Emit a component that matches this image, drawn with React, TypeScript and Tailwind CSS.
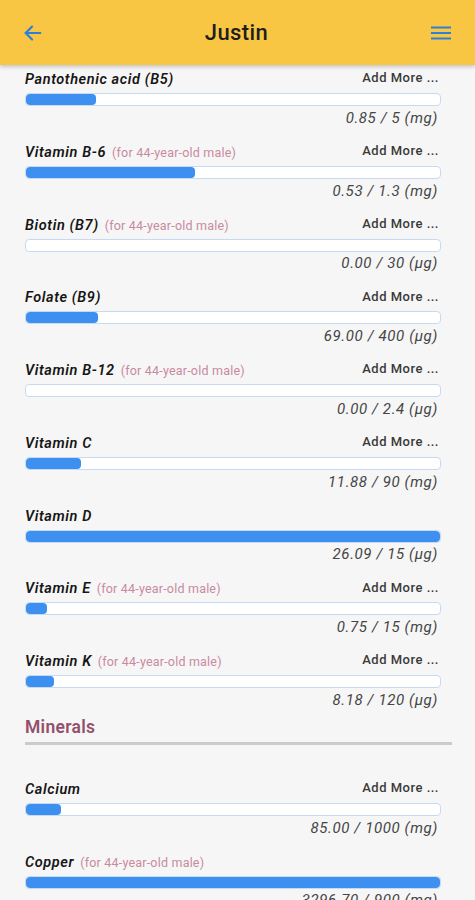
const font = { fontFamily: 'Roboto, "Noto Sans", sans-serif' };

type Item = {
  name: string;
  forMale?: boolean;
  addMore?: boolean;
  value: string;
  pct: number;
};

const vitamins: Item[] = [
  { name: 'Pantothenic acid (B5)', addMore: true, value: '0.85 / 5 (mg)', pct: 17 },
  { name: 'Vitamin B-6', forMale: true, addMore: true, value: '0.53 / 1.3 (mg)', pct: 40.8 },
  { name: 'Biotin (B7)', forMale: true, addMore: true, value: '0.00 / 30 (µg)', pct: 0 },
  { name: 'Folate (B9)', addMore: true, value: '69.00 / 400 (µg)', pct: 17.3 },
  { name: 'Vitamin B-12', forMale: true, addMore: true, value: '0.00 / 2.4 (µg)', pct: 0 },
  { name: 'Vitamin C', addMore: true, value: '11.88 / 90 (mg)', pct: 13.2 },
  { name: 'Vitamin D', value: '26.09 / 15 (µg)', pct: 100 },
  { name: 'Vitamin E', forMale: true, addMore: true, value: '0.75 / 15 (mg)', pct: 5 },
  { name: 'Vitamin K', forMale: true, addMore: true, value: '8.18 / 120 (µg)', pct: 6.8 },
];

const minerals: Item[] = [
  { name: 'Calcium', addMore: true, value: '85.00 / 1000 (mg)', pct: 8.5 },
  { name: 'Copper', forMale: true, value: '3296.70 / 900 (mg)', pct: 100 },
];

function Row({ item }: { item: Item }) {
  return (
    <div className="h-[72.75px] pl-[25px] pr-[34px]">
      <div className="flex items-center justify-between h-[18px]">
        <div className="flex items-baseline">
          <span className="text-[14.5px] font-semibold italic text-[#161616] tracking-[0.6px]">{item.name}</span>
          {item.forMale && (
            <span className="ml-[6px] text-[12.5px] text-[#c98aa0] tracking-[0.2px]">(for 44-year-old male)</span>
          )}
        </div>
        {item.addMore && (
          <span className="text-[13px] font-medium text-[#3a3a3a] tracking-[0.5px] mr-[2px] -mt-[4px]">Add More ...</span>
        )}
      </div>
      <div className="mt-[4px] h-[13px] rounded-[4px] border border-[#c6dbf3] bg-white overflow-hidden">
        {item.pct > 0 && (
          <div className="h-full rounded-[4px] bg-[#3d90f0]" style={{ width: `${item.pct}%` }} />
        )}
      </div>
      <div className="mt-[2px] h-[20px] flex items-center justify-end pr-[3px] text-[15px] italic text-[#454545] tracking-[0.6px]">
        {item.value}
      </div>
    </div>
  );
}

export default function App() {
  return (
    <div className="w-[475px] h-[900px] overflow-hidden bg-[#f6f6f6]" style={font}>
      <header className="relative z-10 h-[65px] bg-[#f9c643] flex items-center justify-between px-[22px] shadow-[0_2px_4px_rgba(0,0,0,0.2)]">
        <svg width="22" height="22" viewBox="0 0 24 24" fill="none" stroke="#2f7fd9" strokeWidth="2.4" strokeLinecap="round" strokeLinejoin="round">
          <path d="M20 12H4" />
          <path d="M11 5l-7 7 7 7" />
        </svg>
        <h1 className="text-[22px] font-medium text-[#1e1e1e] tracking-[0.4px]">Justin</h1>
        <svg width="24" height="24" viewBox="0 0 24 24" fill="none" stroke="#2f7fd9" strokeWidth="2.2">
          <path d="M2 6.5h20M2 12h20M2 17.5h20" />
        </svg>
      </header>
      <main className="pt-[6px]">
        {vitamins.map((v) => (
          <Row key={v.name} item={v} />
        ))}
        <div className="-mt-[11px] pl-[25px] pr-[23px]">
          <div className="text-[17.5px] font-semibold text-[#93506a] tracking-[0.3px] leading-[24px]">Minerals</div>
          <div className="mt-[3px] h-[3px] bg-[#cbcbcb]" />
        </div>
        <div className="pt-[36px]">
          {minerals.map((v) => (
            <Row key={v.name} item={v} />
          ))}
        </div>
      </main>
    </div>
  );
}
